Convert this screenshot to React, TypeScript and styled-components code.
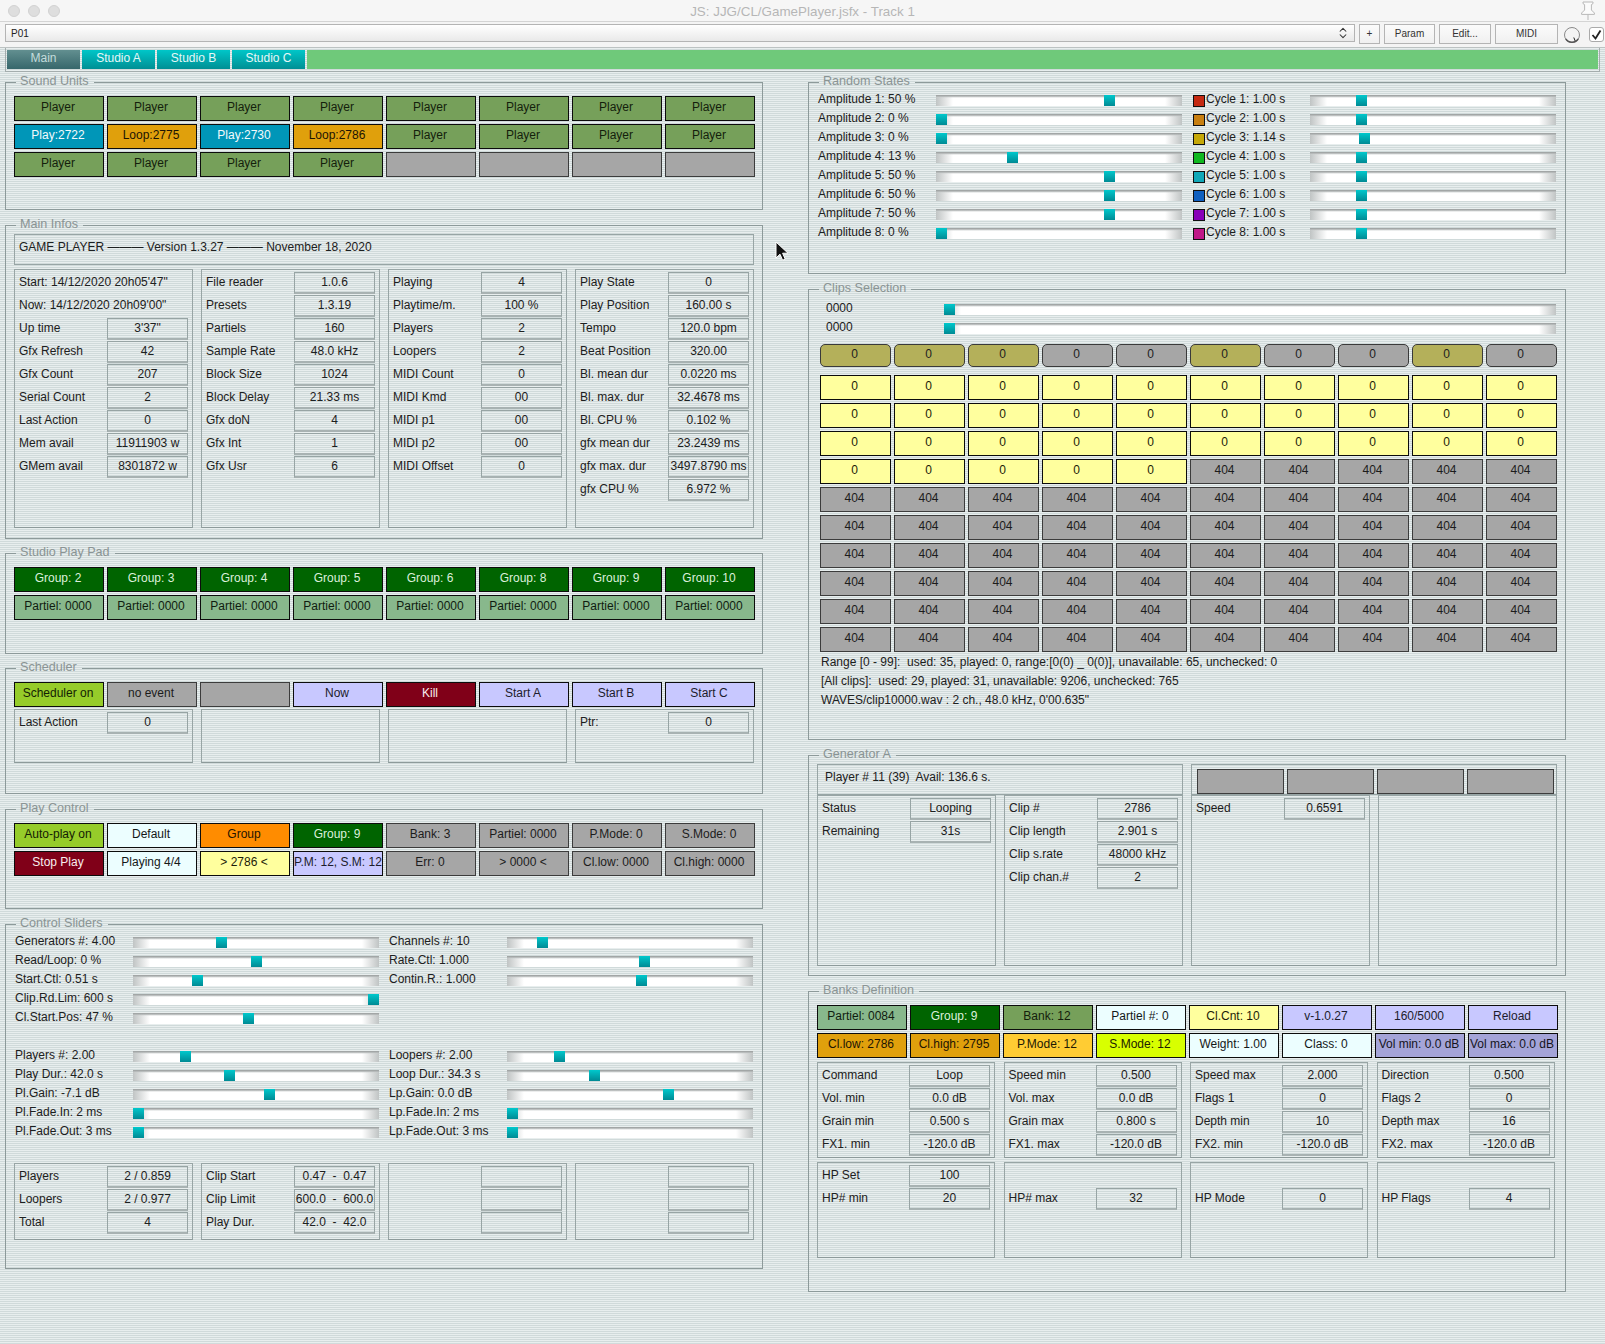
import React from "react";
import styled, { createGlobalStyle } from "styled-components";
import { ChevronsUpDown } from "lucide-react";

const GlobalStyle = createGlobalStyle`
  html, body { margin: 0; padding: 0; }
  body {
    width: 1605px;
    height: 1344px;
    overflow: hidden;
    font: 12px "Liberation Sans", Arial, sans-serif;
    color: #1c2020;
  }
`;

type Kind = "player" | "play" | "loop" | "off" | "lilac" | "kill" | "on" | "ice" | "orange" | "group" | "partiel" | "yellow" | "gold" | "lime" | "violet";

const kinds: Record<Kind, { bg: string; fg: string; edge?: string }> = {
  player: { bg: "#76a05a", fg: "#14200c" },
  play: { bg: "#0096b8", fg: "#f4fafc" },
  loop: { bg: "#e0a00c", fg: "#1c1404" },
  off: { bg: "#a6a6a6", fg: "#1c1c1c", edge: "#3c3c3c" },
  lilac: { bg: "#c8c8ff", fg: "#1c1c2c" },
  kill: { bg: "#800018", fg: "#f8eeee" },
  on: { bg: "#96cc2a", fg: "#142004" },
  ice: { bg: "#ecfeff", fg: "#141818" },
  orange: { bg: "#ff8c00", fg: "#241400" },
  group: { bg: "#006400", fg: "#dcf0dc" },
  partiel: { bg: "#88b88c", fg: "#101c10" },
  yellow: { bg: "#ffff9e", fg: "#1c1c08" },
  gold: { bg: "#ffcc33", fg: "#201804" },
  lime: { bg: "#d8ff00", fg: "#1c2000" },
  violet: { bg: "#a4a4d8", fg: "#14141c" },
};

// window chrome
const Page = styled.div`
  position: relative;
  width: 1605px;
  height: 1344px;
  overflow: hidden;
  background: repeating-linear-gradient(180deg, #e8eeee 0 1px, #d0dada 1px 2px);
`;
const TitleBar = styled.div`
  height: 22px;
  box-sizing: border-box;
  padding: 0 8px;
  display: flex;
  align-items: center;
  gap: 8px;
  background: #f6f6f6;
  border-bottom: 1px solid #d4d4d4;
  position: relative;
`;
const Light = styled.span`
  width: 12px;
  height: 12px;
  box-sizing: border-box;
  border-radius: 50%;
  background: #dedede;
  border: 1px solid #d2d2d2;
`;
const TitleText = styled.div`
  flex: 1;
  text-align: center;
  font-size: 13.4px;
  color: #b6b6b6;
  padding: 2px 33px 0 0;
`;
const PinIcon = styled.svg`
  width: 20px;
  height: 20px;
  margin-right: -1px;
`;
const ToolBar = styled.div`
  height: 26px;
  box-sizing: border-box;
  padding: 2px 0 0 5px;
  display: flex;
  align-items: flex-start;
  background: #f4f4f4;
  border-bottom: 1px solid #bcc2c2;
`;
const PresetSelect = styled.div`
  flex: none;
  width: 1350px;
  height: 18px;
  box-sizing: border-box;
  padding: 0 4px 0 5px;
  display: flex;
  align-items: center;
  justify-content: space-between;
  font-size: 10px;
  color: #222;
  border: 1px solid #b4b4b4;
  background: linear-gradient(180deg, #fff, #e9e9e9);
`;
const ToolButton = styled.div<{ $w: number }>`
  flex: none;
  width: ${(p) => p.$w}px;
  height: 20px;
  box-sizing: border-box;
  margin-left: 4px;
  text-align: center;
  line-height: 18px;
  font-size: 10px;
  color: #333;
  border: 1px solid #b4b4b4;
  background: linear-gradient(180deg, #fbfbfb, #f0f0f0);
`;
const Knob = styled.svg`
  flex: none;
  width: 18px;
  height: 18px;
  margin: 2px 0 0 5px;
`;
const CheckBox = styled.div`
  flex: none;
  width: 15px;
  height: 15px;
  box-sizing: border-box;
  margin: 3px 0 0 8px;
  border: 1px solid #aaa;
  border-radius: 3px;
  background: #fff;
  display: flex;
  align-items: center;
  justify-content: center;
`;
const TabBar = styled.div`
  margin: 0 5px;
  height: 24px;
  box-sizing: border-box;
  padding: 2px 1px 1px;
  display: flex;
  gap: 2px;
  border-left: 1px solid #a4adad;
  border-bottom: 1px solid #a4adad;
  border-right: 1px solid #a4adad;
`;
const Tab = styled.div<{ $active?: boolean }>`
  width: 73px;
  height: 19px;
  text-align: center;
  line-height: 16px;
  color: ${(p) => (p.$active ? "#c4dcdc" : "#e6f8f8")};
  background: ${(p) =>
    p.$active ? "linear-gradient(180deg, #628f90, #37676b)" : "linear-gradient(180deg, #00c6c8, #008f94)"};
`;
const TabFill = styled.div`
  flex: 1;
  height: 19px;
  background: #6fc97a;
`;

// page layout
const Columns = styled.div`
  display: flex;
  gap: 45px;
  padding: 3px 0 0 5px;
`;
const Column = styled.div`
  width: 758px;
`;
const Panel = styled.fieldset<{ $h: number; $pt: number; $mb?: number }>`
  display: block;
  box-sizing: border-box;
  min-width: 0;
  width: 758px;
  height: ${(p) => p.$h}px;
  margin: 0 0 ${(p) => p.$mb ?? 0}px;
  padding: ${(p) => p.$pt}px 8px 0;
  border: 1px solid #8d9a9a;
`;
const Legend = styled.legend`
  margin-left: 2px;
  padding: 0 5px 0 4px;
  height: 15px;
  line-height: 13px;
  font-size: 12.6px;
  color: #8a9494;
`;

// coloured cells
const CellGrid = styled.div<{ $cols: number; $w: number; $gap?: number }>`
  display: grid;
  grid-template-columns: repeat(${(p) => p.$cols}, ${(p) => p.$w}px);
  grid-auto-rows: 25px;
  gap: 3px ${(p) => p.$gap ?? 3}px;
`;
const Cell = styled.div<{ $kind: Kind }>`
  box-sizing: border-box;
  padding-right: 2px;
  text-align: center;
  white-space: nowrap;
  overflow: hidden;
  line-height: 20px;
  color: ${(p) => kinds[p.$kind].fg};
  background: ${(p) => kinds[p.$kind].bg};
  border: 1px solid ${(p) => kinds[p.$kind].edge ?? "#0c0c0c"};
`;
const PillGrid = styled.div`
  display: grid;
  grid-template-columns: repeat(10, 71px);
  gap: 3px;
  margin: 5px 0 8px;
`;
const Pill = styled.div<{ $lit: boolean }>`
  height: 23px;
  box-sizing: border-box;
  padding-right: 2px;
  text-align: center;
  line-height: 18px;
  border: 1px solid #3a3a3a;
  border-radius: 5px;
  background: ${(p) => (p.$lit ? "#b4b05a" : "#a6a6a6")};
`;

// value tables
const Strip = styled.div<{ $w: number; $pl?: number }>`
  width: ${(p) => p.$w}px;
  height: 31px;
  box-sizing: border-box;
  padding: 0 4px 0 ${(p) => p.$pl ?? 4}px;
  line-height: 24px;
  white-space: pre;
  border: 1px solid #98a5a5;
`;
const StripButtons = styled(Strip)`
  padding: 4px 0 0 5px;
`;
const TableRow = styled.div<{ $gap?: number; $space?: number }>`
  display: flex;
  gap: ${(p) => p.$space ?? 8}px;
  margin-top: ${(p) => p.$gap ?? 0}px;
`;
const Table = styled.div<{ $h: number; $w: number }>`
  width: ${(p) => p.$w}px;
  height: ${(p) => p.$h}px;
  box-sizing: border-box;
  padding: 2px 4px 0;
  border: 1px solid #98a5a5;
  border-bottom-color: #8d9a9a;
`;
const Row = styled.div`
  display: flex;
  justify-content: space-between;
  height: 23px;
`;
const RowLabel = styled.div`
  line-height: 20px;
  white-space: nowrap;
`;
const Value = styled.div`
  width: 81px;
  height: 22px;
  box-sizing: border-box;
  text-align: center;
  line-height: 18px;
  white-space: pre;
  border: 1px solid #97a4a4;
  border-bottom: 2px solid #a8b2b2;
`;
const SplitBlocks = styled.div`
  display: flex;
  gap: 8px;
`;
const SplitBlock = styled.div`
  width: 366px;
`;

// sliders
const SliderLine = styled.div<{ $indent?: number }>`
  display: flex;
  height: 19px;
  margin-left: ${(p) => p.$indent ?? 0}px;
`;
const SliderLabel = styled.div<{ $w: number }>`
  width: ${(p) => p.$w}px;
  line-height: 14px;
  white-space: nowrap;
`;
const Track = styled.div<{ $w: number }>`
  position: relative;
  flex: none;
  width: ${(p) => p.$w}px;
  height: 11px;
  margin-top: 3px;
  background:
    linear-gradient(180deg, #a2a6a6 0, #a2a6a6 1px, rgba(200, 204, 204, 0.7) 2px, transparent 3px),
    linear-gradient(90deg, #c0c4c4, #fff 17px, #fff calc(100% - 17px), #c0c4c4);
`;
const Thumb = styled.div<{ $at: number }>`
  position: absolute;
  left: ${(p) => p.$at}px;
  top: 0;
  width: 11px;
  height: 11px;
  background: linear-gradient(180deg, #00c8cc, #008a94);
`;
const Swatch = styled.div<{ $color: string }>`
  flex: none;
  width: 12px;
  height: 12px;
  box-sizing: border-box;
  margin: 3px 1px 0 11px;
  background: ${(p) => p.$color};
  border: 1px solid #101010;
`;
const SliderBanks = styled.div`
  display: grid;
  grid-template-columns: 374px 364px;
  margin-left: 1px;
`;
const SliderStack = styled.div<{ $mb?: number }>`
  margin-bottom: ${(p) => p.$mb ?? 0}px;
`;
const ClipsInner = styled.div`
  margin-left: 3px;
`;
const ClipPad = styled.div`
  display: grid;
  grid-template-columns: repeat(10, 71px);
  grid-auto-rows: 25px;
  gap: 3px;
  margin-bottom: 1px;
`;
const StatusLine = styled.div`
  height: 19px;
  line-height: 19px;
  margin-left: 1px;
  white-space: pre;
`;
const Cursor = styled.svg`
  position: absolute;
  left: 775px;
  top: 241px;
  width: 14px;
  height: 22px;
`;

type CellDef = [string, Kind];

const soundUnits: CellDef[] = [
  ...Array.from({ length: 8 }, (): CellDef => ["Player", "player"]),
  ["Play:2722", "play"], ["Loop:2775", "loop"], ["Play:2730", "play"], ["Loop:2786", "loop"],
  ["Player", "player"], ["Player", "player"], ["Player", "player"], ["Player", "player"],
  ["Player", "player"], ["Player", "player"], ["Player", "player"], ["Player", "player"],
  ["", "off"], ["", "off"], ["", "off"], ["", "off"],
];
const studioPad: CellDef[] = [
  ...[2, 3, 4, 5, 6, 8, 9, 10].map((g): CellDef => [`Group: ${g}`, "group"]),
  ...Array.from({ length: 8 }, (): CellDef => ["Partiel: 0000", "partiel"]),
];
const schedulerCells: CellDef[] = [
  ["Scheduler on", "on"], ["no event", "off"], ["", "off"], ["Now", "lilac"],
  ["Kill", "kill"], ["Start A", "lilac"], ["Start B", "lilac"], ["Start C", "lilac"],
];
const playCells: CellDef[] = [
  ["Auto-play on", "on"], ["Default", "ice"], ["Group", "orange"], ["Group: 9", "group"],
  ["Bank: 3", "off"], ["Partiel: 0000", "off"], ["P.Mode: 0", "off"], ["S.Mode: 0", "off"],
  ["Stop Play", "kill"], ["Playing 4/4", "ice"], ["> 2786 <", "yellow"], ["P.M: 12, S.M: 12", "lilac"],
  ["Err: 0", "off"], ["> 0000 <", "off"], ["Cl.low: 0000", "off"], ["Cl.high: 0000", "off"],
];
const bankCells: CellDef[] = [
  ["Partiel: 0084", "partiel"], ["Group: 9", "group"], ["Bank: 12", "player"], ["Partiel #: 0", "ice"],
  ["Cl.Cnt: 10", "yellow"], ["v-1.0.27", "lilac"], ["160/5000", "lilac"], ["Reload", "lilac"],
  ["Cl.low: 2786", "loop"], ["Cl.high: 2795", "loop"], ["P.Mode: 12", "gold"], ["S.Mode: 12", "lime"],
  ["Weight: 1.00", "ice"], ["Class: 0", "ice"], ["Vol min: 0.0 dB", "violet"], ["Vol max: 0.0 dB", "violet"],
];

type TableRowDef = [string, string?];

const mainTables: TableRowDef[][] = [
  [
    [`Start: 14/12/2020 20h05'47"`], [`Now: 14/12/2020 20h09'00"`], ["Up time", `3'37"`], ["Gfx Refresh", "42"],
    ["Gfx Count", "207"], ["Serial Count", "2"], ["Last Action", "0"], ["Mem avail", "11911903 w"], ["GMem avail", "8301872 w"],
  ],
  [
    ["File reader", "1.0.6"], ["Presets", "1.3.19"], ["Partiels", "160"], ["Sample Rate", "48.0 kHz"], ["Block Size", "1024"],
    ["Block Delay", "21.33 ms"], ["Gfx doN", "4"], ["Gfx Int", "1"], ["Gfx Usr", "6"],
  ],
  [
    ["Playing", "4"], ["Playtime/m.", "100 %"], ["Players", "2"], ["Loopers", "2"], ["MIDI Count", "0"],
    ["MIDI Kmd", "00"], ["MIDI p1", "00"], ["MIDI p2", "00"], ["MIDI Offset", "0"],
  ],
  [
    ["Play State", "0"], ["Play Position", "160.00 s"], ["Tempo", "120.0 bpm"], ["Beat Position", "320.00"], ["Bl. mean dur", "0.0220 ms"],
    ["Bl. max. dur", "32.4678 ms"], ["Bl. CPU %", "0.102 %"], ["gfx mean dur", "23.2439 ms"], ["gfx max. dur", "3497.8790 ms"], ["gfx CPU %", "6.972 %"],
  ],
];
const totalsTables: TableRowDef[][] = [
  [["Players", "2 / 0.859"], ["Loopers", "2 / 0.977"], ["Total", "4"]],
  [["Clip Start", "0.47  -  0.47"], ["Clip Limit", "600.0  -  600.0"], ["Play Dur.", "42.0  -  42.0"]],
  [["", ""], ["", ""], ["", ""]],
  [["", ""], ["", ""], ["", ""]],
];
const bankTables: TableRowDef[][] = [
  [["Command", "Loop"], ["Vol. min", "0.0 dB"], ["Grain min", "0.500 s"], ["FX1. min", "-120.0 dB"]],
  [["Speed min", "0.500"], ["Vol. max", "0.0 dB"], ["Grain max", "0.800 s"], ["FX1. max", "-120.0 dB"]],
  [["Speed max", "2.000"], ["Flags 1", "0"], ["Depth min", "10"], ["FX2. min", "-120.0 dB"]],
  [["Direction", "0.500"], ["Flags 2", "0"], ["Depth max", "16"], ["FX2. max", "-120.0 dB"]],
];
const hpTables: TableRowDef[][] = [
  [["HP Set", "100"], ["HP# min", "20"]],
  [[""], ["HP# max", "32"]],
  [[""], ["HP Mode", "0"]],
  [[""], ["HP Flags", "4"]],
];

type SliderDef = [string, number];

const amplitudes: SliderDef[] = [
  ["Amplitude 1: 50 %", 168], ["Amplitude 2: 0 %", 0], ["Amplitude 3: 0 %", 0], ["Amplitude 4: 13 %", 71],
  ["Amplitude 5: 50 %", 168], ["Amplitude 6: 50 %", 168], ["Amplitude 7: 50 %", 168], ["Amplitude 8: 0 %", 0],
];
const cycles: { label: string; at: number; color: string }[] = [
  { label: "Cycle 1: 1.00 s", at: 46, color: "#c52a12" },
  { label: "Cycle 2: 1.00 s", at: 46, color: "#c87f10" },
  { label: "Cycle 3: 1.14 s", at: 49, color: "#c6a808" },
  { label: "Cycle 4: 1.00 s", at: 46, color: "#10b820" },
  { label: "Cycle 5: 1.00 s", at: 46, color: "#10a8b8" },
  { label: "Cycle 6: 1.00 s", at: 46, color: "#1060c0" },
  { label: "Cycle 7: 1.00 s", at: 46, color: "#8800b8" },
  { label: "Cycle 8: 1.00 s", at: 46, color: "#c01888" },
];
const slidersTopLeft: SliderDef[] = [
  ["Generators #: 4.00", 83], ["Read/Loop: 0 %", 118], ["Start.Ctl: 0.51 s", 59], ["Clip.Rd.Lim: 600 s", 235], ["Cl.Start.Pos: 47 %", 110],
];
const slidersTopRight: SliderDef[] = [["Channels #: 10", 30], ["Rate.Ctl: 1.000", 132], ["Contin.R.: 1.000", 129]];
const slidersBottomLeft: SliderDef[] = [
  ["Players #: 2.00", 47], ["Play Dur.: 42.0 s", 91], ["Pl.Gain: -7.1 dB", 131], ["Pl.Fade.In: 2 ms", 0], ["Pl.Fade.Out: 3 ms", 0],
];
const slidersBottomRight: SliderDef[] = [
  ["Loopers #: 2.00", 47], ["Loop Dur.: 34.3 s", 82], ["Lp.Gain: 0.0 dB", 156], ["Lp.Fade.In: 2 ms", 0], ["Lp.Fade.Out: 3 ms", 0],
];

const clipPills = [1, 1, 1, 0, 0, 1, 0, 0, 1, 0];
const clipCells: CellDef[] = Array.from({ length: 100 }, (_, i): CellDef => (i < 35 ? ["0", "yellow"] : ["404", "off"]));

const Cells = ({ items, cols = 8, w = 90, gap }: { items: CellDef[]; cols?: number; w?: number; gap?: number }) => (
  <CellGrid $cols={cols} $w={w} $gap={gap}>
    {items.map(([text, kind], i) => (
      <Cell key={i} $kind={kind}>{text}</Cell>
    ))}
  </CellGrid>
);

const ValueTable = ({ rows, h, w }: { rows: TableRowDef[]; h: number; w: number }) => (
  <Table $h={h} $w={w}>
    {rows.map(([label, value], i) => (
      <Row key={i}>
        <RowLabel>{label}</RowLabel>
        {value !== undefined && <Value>{value}</Value>}
      </Row>
    ))}
  </Table>
);

const Tables = ({ sets, h, gap, w = 179, space }: { sets: TableRowDef[][]; h: number; gap?: number; w?: number; space?: number }) => (
  <TableRow $gap={gap} $space={space}>
    {sets.map((rows, i) => (
      <ValueTable key={i} rows={rows} h={h} w={w} />
    ))}
  </TableRow>
);

const Slider = ({ label, at, w = 118 }: { label: string; at: number; w?: number }) => (
  <SliderLine>
    <SliderLabel $w={w}>{label}</SliderLabel>
    <Track $w={246}>
      <Thumb $at={at} />
    </Track>
  </SliderLine>
);

const SliderList = ({ items, mb }: { items: SliderDef[]; mb?: number }) => (
  <SliderStack $mb={mb}>
    {items.map(([label, at]) => (
      <Slider key={label} label={label} at={at} />
    ))}
  </SliderStack>
);

const App = () => (
  <Page>
    <GlobalStyle />
    <TitleBar>
      <Light />
      <Light />
      <Light />
      <TitleText>JS: JJG/CL/GamePlayer.jsfx - Track 1</TitleText>
      <PinIcon viewBox="0 0 20 20">
        <path d="M5 1h10v1.6l-1.6 1V9l3 3v1.4H3.600V12l3-3V3.600L5 2.600z" fill="#fbfbfb" stroke="#b8b8b8" />
        <path d="M10 13.500V19" stroke="#b8b8b8" fill="none" />
      </PinIcon>
    </TitleBar>
    <ToolBar>
      <PresetSelect>
        P01
        <ChevronsUpDown size={14} color="#333" strokeWidth={1.8} />
      </PresetSelect>
      <ToolButton $w={21}>+</ToolButton>
      <ToolButton $w={51}>Param</ToolButton>
      <ToolButton $w={52}>Edit...</ToolButton>
      <ToolButton $w={63}>MIDI</ToolButton>
      <Knob viewBox="0 0 18 18">
        <circle cx="9" cy="9" r="7.500" fill="#f4f4f4" stroke="#8a8a8a" />
        <path d="M2.800 13A7.500 7.500 0 0 0 15.200 13" fill="none" stroke="#555" strokeWidth="1.400" />
        <path d="M10.800 11.500L12.200 15" stroke="#222" fill="none" />
      </Knob>
      <CheckBox>
        <svg width="11" height="11" viewBox="0 0 11 11">
          <path d="M1.500 6l3 3.500L9.500 1.500" fill="none" stroke="#222" strokeWidth="1.800" />
        </svg>
      </CheckBox>
    </ToolBar>
    <TabBar>
      <Tab $active>Main</Tab>
      <Tab>Studio A</Tab>
      <Tab>Studio B</Tab>
      <Tab>Studio C</Tab>
      <TabFill />
    </TabBar>
    <Columns>
      <Column>
        <Panel $h={135} $pt={6} $mb={8}>
          <Legend>Sound Units</Legend>
          <Cells items={soundUnits} />
        </Panel>
        <Panel $h={321} $pt={1} $mb={7}>
          <Legend>Main Infos</Legend>
          <Strip $w={740}>{"GAME PLAYER ——— Version 1.3.27 ——— November 18, 2020"}</Strip>
          <Tables sets={mainTables} h={259} gap={4} />
        </Panel>
        <Panel $h={108} $pt={6} $mb={7}>
          <Legend>Studio Play Pad</Legend>
          <Cells items={studioPad} />
        </Panel>
        <Panel $h={133} $pt={6} $mb={8}>
          <Legend>Scheduler</Legend>
          <Cells items={schedulerCells} />
          <Tables sets={[[["Last Action", "0"]], [], [], [["Ptr:", "0"]]]} h={54} gap={2} />
        </Panel>
        <Panel $h={107} $pt={6} $mb={8}>
          <Legend>Play Control</Legend>
          <Cells items={playCells} />
        </Panel>
        <Panel $h={352} $pt={2}>
          <Legend>Control Sliders</Legend>
          <SliderBanks>
            <SliderList items={slidersTopLeft} mb={19} />
            <SliderList items={slidersTopRight} mb={19} />
            <SliderList items={slidersBottomLeft} />
            <SliderList items={slidersBottomRight} />
          </SliderBanks>
          <Tables sets={totalsTables} h={77} gap={20} />
        </Panel>
      </Column>
      <Column>
        <Panel $h={199} $pt={2} $mb={8}>
          <Legend>Random States</Legend>
          {amplitudes.map(([label, at], i) => (
            <SliderLine key={label} $indent={1}>
              <SliderLabel $w={118}>{label}</SliderLabel>
              <Track $w={246}>
                <Thumb $at={at} />
              </Track>
              <Swatch $color={cycles[i].color} />
              <SliderLabel $w={104}>{cycles[i].label}</SliderLabel>
              <Track $w={246}>
                <Thumb $at={cycles[i].at} />
              </Track>
            </SliderLine>
          ))}
        </Panel>
        <Panel $h={458} $pt={4} $mb={8}>
          <Legend>Clips Selection</Legend>
          <ClipsInner>
            {["0000", "0000"].map((label, i) => (
              <SliderLine key={i} $indent={6}>
                <SliderLabel $w={118}>{label}</SliderLabel>
                <Track $w={612}>
                  <Thumb $at={0} />
                </Track>
              </SliderLine>
            ))}
            <PillGrid>
              {clipPills.map((lit, i) => (
                <Pill key={i} $lit={lit === 1}>0</Pill>
              ))}
            </PillGrid>
            <ClipPad>
              {clipCells.map(([text, kind], i) => (
                <Cell key={i} $kind={kind}>{text}</Cell>
              ))}
            </ClipPad>
            <StatusLine>{"Range [0 - 99]:  used: 35, played: 0, range:[0(0) _ 0(0)], unavailable: 65, unchecked: 0"}</StatusLine>
            <StatusLine>{"[All clips]:  used: 29, played: 31, unavailable: 9206, unchecked: 765"}</StatusLine>
            <StatusLine>{`WAVES/clip10000.wav : 2 ch., 48.0 kHz, 0'00.635"`}</StatusLine>
          </ClipsInner>
        </Panel>
        <Panel $h={228} $pt={1} $mb={8}>
          <Legend>Generator A</Legend>
          <SplitBlocks>
            <SplitBlock>
              <Strip $w={366} $pl={7}>{"Player # 11 (39)  Avail: 136.6 s."}</Strip>
              <Tables
                sets={[
                  [["Status", "Looping"], ["Remaining", "31s"]],
                  [["Clip #", "2786"], ["Clip length", "2.901 s"], ["Clip s.rate", "48000 kHz"], ["Clip chan.#", "2"]],
                ]}
                h={171}
              />
            </SplitBlock>
            <SplitBlock>
              <StripButtons $w={366}>
                <Cells items={[["", "off"], ["", "off"], ["", "off"], ["", "off"]]} cols={4} w={87} />
              </StripButtons>
              <Tables sets={[[["Speed", "0.6591"]], []]} h={171} />
            </SplitBlock>
          </SplitBlocks>
        </Panel>
        <Panel $h={308} $pt={6}>
          <Legend>Banks Definition</Legend>
          <Cells items={bankCells} />
          <Tables sets={bankTables} h={96} gap={4} w={178} space={8.5} />
          <Tables sets={hpTables} h={96} gap={4} w={178} space={8.5} />
        </Panel>
      </Column>
    </Columns>
    <Cursor viewBox="0 0 14 22">
      <path d="M1 1v16l4-3.800 2.600 6 2.600-1.100-2.600-5.900h5.400z" fill="#111" stroke="#fff" strokeWidth="1" />
    </Cursor>
  </Page>
);

export default App;
